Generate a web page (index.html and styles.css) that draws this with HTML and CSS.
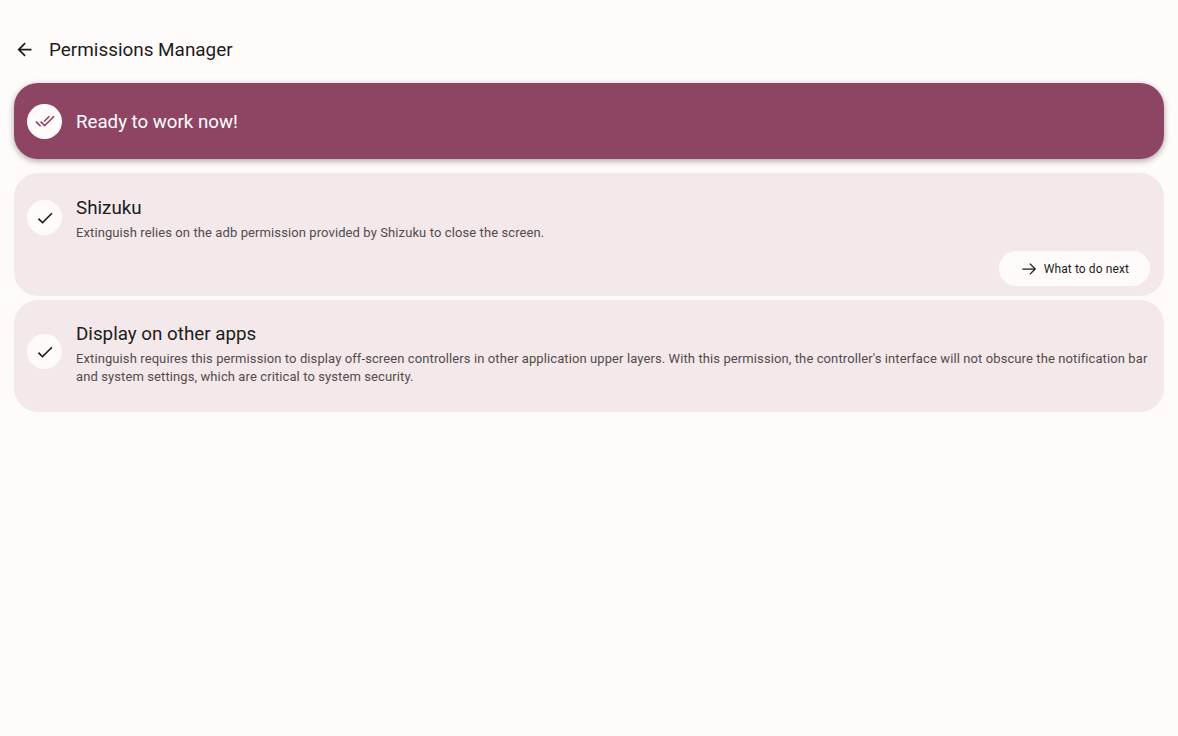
FILE: index.html
```html
<!DOCTYPE html>
<html lang="en">

<head>
    <meta charset="UTF-8">
    <meta name="viewport" content="width=device-width, initial-scale=1.0">
    <title>Permissions Manager</title>
    <link rel="stylesheet" href="styles.css">
</head>

<body>
    <header class="top_bar">
        <svg class="back_icon" viewBox="0 0 24 24" width="21" height="21">
            <path d="M20 11H7.83l5.59-5.59L12 4l-8 8 8 8 1.41-1.41L7.83 13H20v-2z"></path>
        </svg>
        <h1>Permissions Manager</h1>
    </header>

    <main class="cards">
        <section class="status_card">
            <div class="check_circle">
                <svg viewBox="0 0 24 24" class="done_all">
                    <path d="M18 7l-1.41-1.41-6.34 6.34 1.41 1.41L18 7zm4.24-1.41L11.66 16.17 7.48 12l-1.41 1.41L11.66 19l12-12-1.42-1.41zM.41 13.41L6 19l1.41-1.41L1.83 12 .41 13.41z"></path>
                </svg>
            </div>
            <span class="status_text">Ready to work now!</span>
        </section>

        <section class="perm_card perm_shizuku">
            <div class="perm_row">
                <div class="check_circle">
                    <svg viewBox="0 0 24 24">
                        <path d="M9 16.17L4.83 12l-1.42 1.41L9 19 21 7l-1.41-1.41z"></path>
                    </svg>
                </div>
                <div class="perm_text">
                    <h2>Shizuku</h2>
                    <p>Extinguish relies on the adb permission provided by Shizuku to close the screen.</p>
                </div>
            </div>
            <div class="perm_actions">
                <button class="next_button">
                    <svg viewBox="0 0 24 24" width="20" height="20">
                        <path d="M4 12h15M13 5.5l6.5 6.5-6.5 6.5" fill="none" stroke="#1d1b1c" stroke-width="1.5"></path>
                    </svg>
                    What to do next
                </button>
            </div>
        </section>

        <section class="perm_card perm_overlay">
            <div class="perm_row">
                <div class="check_circle">
                    <svg viewBox="0 0 24 24">
                        <path d="M9 16.17L4.83 12l-1.42 1.41L9 19 21 7l-1.41-1.41z"></path>
                    </svg>
                </div>
                <div class="perm_text">
                    <h2>Display on other apps</h2>
                    <p>Extinguish requires this permission to display off-screen controllers in other application upper layers. With this permission, the controller's interface will not obscure the notification bar and system settings, which are critical to system security.</p>
                </div>
            </div>
        </section>
    </main>
</body>

</html>
```

FILE: styles.css
```css
body {
    font-family: Roboto, Arial, sans-serif;
    background-color: #fffbfa;
    color: #1d1b1c;
    margin: 0;
    height: 736px;
    overflow: hidden;
}

.top_bar {
    display: flex;
    align-items: center;
    height: 34px;
    padding: 32px 0 0 14px;
}

.back_icon {
    fill: #1d1b1c;
}

.top_bar h1 {
    margin: 0 0 0 14px;
    font-size: 18.9px;
    font-weight: 400;
}

.cards {
    display: flex;
    flex-direction: column;
    padding: 17px 14px 0;
}

.status_card {
    display: flex;
    align-items: center;
    height: 76px;
    padding: 0 13px;
    margin-bottom: 14px;
    background-color: #8e4564;
    border-radius: 24px;
    box-shadow: 0 2px 6px rgba(0, 0, 0, 0.35);
    box-sizing: border-box;
}

.status_text {
    margin: 2px 0 0 14px;
    font-size: 18.7px;
    color: #fff;
}

.check_circle {
    display: flex;
    align-items: center;
    justify-content: center;
    flex-shrink: 0;
    width: 35px;
    height: 35px;
    background-color: #fffbfa;
    border-radius: 50%;
}

.check_circle svg {
    width: 20px;
    height: 20px;
    fill: #1d1b1c;
}

.check_circle .done_all {
    fill: #8e4564;
}

.perm_card {
    background-color: #f3e9ea;
    border-radius: 24px;
    padding: 0 13px;
    box-sizing: border-box;
}

.perm_shizuku {
    height: 123px;
    padding-top: 24px;
    margin-bottom: 4px;
}

.perm_overlay {
    height: 112px;
    padding-top: 23px;
}

.perm_overlay .perm_text p {
    margin-top: 5px;
}

.perm_row {
    display: flex;
    align-items: center;
}

.perm_row .check_circle {
    margin-bottom: 4px;
}

.perm_overlay .check_circle {
    margin-bottom: 6px;
}

.perm_text {
    margin-left: 14px;
    min-width: 0;
}

.perm_text h2 {
    margin: 0;
    font-size: 18.8px;
    line-height: 22px;
    font-weight: 400;
}

.perm_text p {
    margin: 5px 0 0;
    font-size: 13px;
    line-height: 18px;
    letter-spacing: 0.1px;
    color: #554a4c;
}

.perm_actions {
    display: flex;
    justify-content: flex-end;
    margin-top: 9px;
    padding-right: 1px;
}

.next_button {
    display: flex;
    align-items: center;
    gap: 5px;
    height: 35px;
    padding: 0 21px 0 20px;
    border: none;
    border-radius: 18px;
    background-color: #fffbfa;
    color: #1d1b1c;
    font-family: Roboto, Arial, sans-serif;
    font-size: 12px;
    font-weight: 400;
    letter-spacing: 0.1px;
}
```
